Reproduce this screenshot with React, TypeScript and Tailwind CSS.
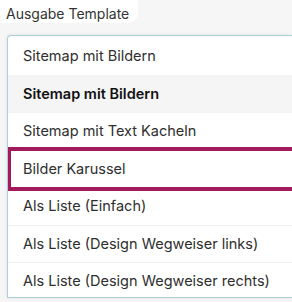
import React from "react";

const options = [
  { label: "Sitemap mit Bildern" },
  { label: "Sitemap mit Bildern", selected: true },
  { label: "Sitemap mit Text Kacheln" },
  { label: "Bilder Karussel", active: true },
  { label: "Als Liste (Einfach)" },
  { label: "Als Liste (Design Wegweiser links)" },
  { label: "Als Liste (Design Wegweiser rechts)" },
];

export default function App() {
  return (
    <div
      className="w-[292px] h-[302px] overflow-hidden bg-[#f6f6f6] text-[#2e2e2e]"
      style={{ fontFamily: "Inter, 'Open Sans', sans-serif" }}
    >
      {/* label */}
      <div className="w-[138px] h-[23px] bg-white rounded-br-[10px] pl-[6px] pt-[6px] text-[14px] leading-[16px] text-[#333]">
        Ausgabe Template
      </div>

      {/* dropdown */}
      <div className="mt-[12px] ml-[7px] h-[263px] bg-white border border-r-0 border-[#a9d0d8] rounded-tl-[4px] overflow-hidden pt-[2px] shadow-[0_0_4px_rgba(0,0,0,0.08)]">
        {options.map((o, i) =>
          o.active ? (
            <div
              key={i}
              className="relative z-10 h-[44px] -my-[3.25px] -ml-px flex items-center pl-[12px] border-4 border-r-0 border-[#a31a5c] bg-white text-[14.5px]"
            >
              {o.label}
            </div>
          ) : (
            <div
              key={i}
              className={`h-[37.5px] flex items-center pl-[15px] text-[14.5px] border-b border-[#f3f3f3] ${
                o.selected ? "bg-[#f5f5f5] font-semibold text-[#111]" : ""
              }`}
            >
              {o.label}
            </div>
          )
        )}
      </div>
    </div>
  );
}
